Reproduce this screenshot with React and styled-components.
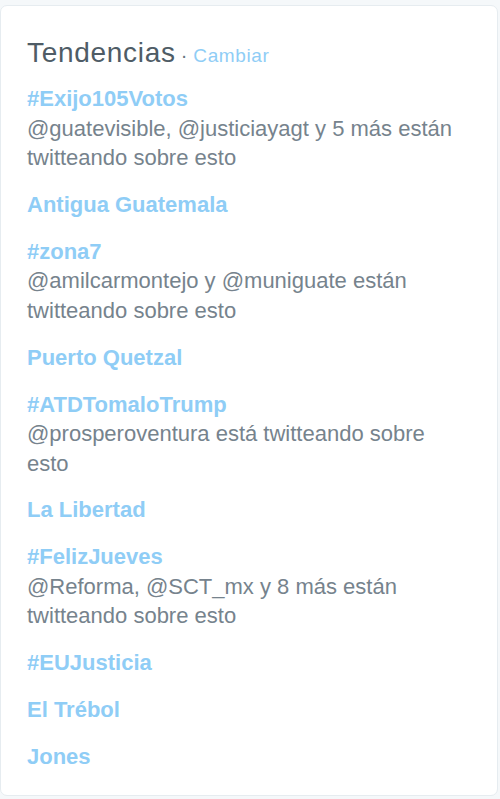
import React from "react";
import styled, { createGlobalStyle } from "styled-components";

const trends = [
  { name: "#Exijo105Votos", desc: "@guatevisible, @justiciayagt y 5 más están twitteando sobre esto" },
  { name: "Antigua Guatemala" },
  { name: "#zona7", desc: "@amilcarmontejo y @muniguate están twitteando sobre esto" },
  { name: "Puerto Quetzal" },
  { name: "#ATDTomaloTrump", desc: "@prosperoventura está twitteando sobre esto" },
  { name: "La Libertad" },
  { name: "#FelizJueves", desc: "@Reforma, @SCT_mx y 8 más están twitteando sobre esto" },
  { name: "#EUJusticia" },
  { name: "El Trébol" },
  { name: "Jones" },
];

const GlobalStyle = createGlobalStyle`
  html, body {
    margin: 0;
    padding: 0;
    background: #f5f8fa;
  }
  body {
    font-family: "Liberation Sans", Arial, Helvetica, sans-serif;
  }
`;

const Page = styled.div`
  width: 500px;
  height: 799px;
  padding-top: 5px;
  box-sizing: border-box;
`;

const Card = styled.div`
  width: 498px;
  height: 791px;
  box-sizing: border-box;
  background: #fff;
  border: 1px solid #e6ecf0;
  border-radius: 7px;
  padding: 29px 20px 0 26px;
`;

const Header = styled.div`
  display: flex;
  align-items: baseline;
  line-height: 36px;
  margin-bottom: 10px;
`;

const Title = styled.span`
  font-size: 28px;
  color: #4f5c66;
  letter-spacing: 0.7px;
`;

const Dot = styled.span`
  font-size: 20px;
  color: #66757f;
  margin: 0 6px 0 5px;
`;

const Change = styled.a`
  font-size: 19px;
  color: #8fcdf6;
  letter-spacing: 0.6px;
  text-decoration: none;
`;

const List = styled.ul`
  list-style: none;
  margin: 0;
  padding: 0;
  display: flex;
  flex-direction: column;
  gap: 17.4px;
`;

const Item = styled.li`
  font-size: 22px;
  line-height: 29.5px;
`;

const Name = styled.a`
  display: block;
  font-weight: bold;
  color: #8fcdf6;
  text-decoration: none;
`;

const Desc = styled.div`
  color: #76838d;
  max-width: 440px;
`;

export default function App() {
  return (
    <Page>
      <GlobalStyle />
      <Card>
        <Header>
          <Title>Tendencias</Title>
          <Dot>·</Dot>
          <Change href="#">Cambiar</Change>
        </Header>
        <List>
          {trends.map((t) => (
            <Item key={t.name}>
              <Name href="#">{t.name}</Name>
              {t.desc && <Desc>{t.desc}</Desc>}
            </Item>
          ))}
        </List>
      </Card>
    </Page>
  );
}
